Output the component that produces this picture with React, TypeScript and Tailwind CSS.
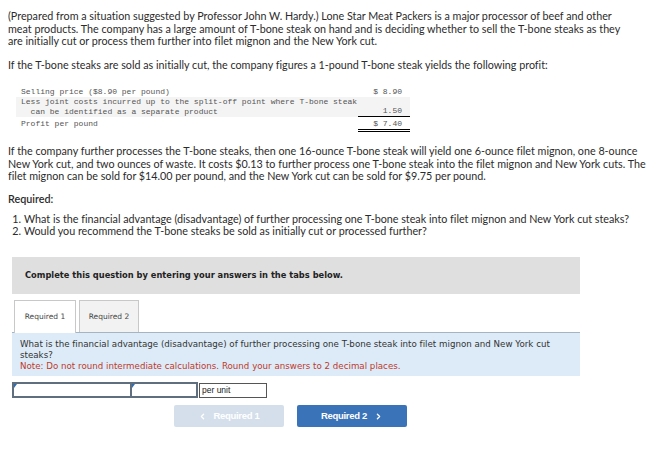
import { ChevronLeft, ChevronRight } from "lucide-react";

export default function App() {
  return (
    <div className="w-[663px] h-[459px] bg-white overflow-hidden text-[#2b2b2b] [font-variant-ligatures:none]">
      <div className="pl-[8px] pt-[10px] font-['Lato',sans-serif] text-[10.75px] leading-[12.5px]">
        <p className="whitespace-nowrap">
          (Prepared from a situation suggested by Professor John W. Hardy.) Lone Star Meat Packers is a major processor of beef and other
          <br />
          meat products. The company has a large amount of T-bone steak on hand and is deciding whether to sell the T-bone steaks as they
          <br />
          are initially cut or process them further into filet mignon and the New York cut.
        </p>
        <p className="mt-[11px] whitespace-nowrap">
          If the T-bone steaks are sold as initially cut, the company figures a 1-pound T-bone steak yields the following profit:
        </p>
      </div>

      <div className="ml-[16px] mt-[16px] w-[394px] font-['Liberation_Mono',monospace] text-[8px] leading-[10px] text-[#555]">
        <div className="flex">
          <div className="w-[342px] pl-[5px]">Selling price ($8.90 per pound)</div>
          <div className="w-[52px] text-right pr-[8px]">$ 8.90</div>
        </div>
        <div className="flex bg-[#f4f4f4]">
          <div className="w-[342px] pl-[5px] whitespace-pre">
            {"Less joint costs incurred up to the split-off point where T-bone steak\n  can be identified as a separate product"}
          </div>
          <div className="w-[52px] flex flex-col justify-end text-right pr-[8px] border-b border-black">1.50</div>
        </div>
        <div className="flex">
          <div className="w-[342px] pl-[5px] pt-[2px]">Profit per pound</div>
          <div className="w-[52px] text-right pr-[8px] pt-[2px] border-b-[3px] border-double border-black">$ 7.40</div>
        </div>
      </div>

      <div className="pl-[8px] mt-[13px] font-['Lato',sans-serif] text-[10.75px] leading-[12.5px]">
        <p className="whitespace-nowrap">
          If the company further processes the T-bone steaks, then one 16-ounce T-bone steak will yield one 6-ounce filet mignon, one 8-ounce
          <br />
          New York cut, and two ounces of waste. It costs $0.13 to further process one T-bone steak into the filet mignon and New York cuts. The
          <br />
          filet mignon can be sold for $14.00 per pound, and the New York cut can be sold for $9.75 per pound.
        </p>
        <p className="mt-[10px] font-semibold">Required:</p>
        <div className="mt-[8px] leading-[12px]">
          <div className="flex">
            <span className="w-[13px] text-right">1.</span>
            <span className="ml-[3px] whitespace-nowrap">
              What is the financial advantage (disadvantage) of further processing one T-bone steak into filet mignon and New York cut steaks?
            </span>
          </div>
          <div className="flex">
            <span className="w-[13px] text-right">2.</span>
            <span className="ml-[3px] whitespace-nowrap">
              Would you recommend the T-bone steaks be sold as initially cut or processed further?
            </span>
          </div>
        </div>
      </div>

      <div className="ml-[12px] mt-[20px] w-[568px] h-[37px] bg-[#dfdfdf] flex items-center pl-[13px] font-['DejaVu_Sans',sans-serif] font-bold text-[8.3px] text-[#222]">
        Complete this question by entering your answers in the tabs below.
      </div>

      <div className="ml-[12px] mt-[5px] w-[568px] font-['DejaVu_Sans',sans-serif]">
        <div className="flex items-end pl-[2px] gap-[3px] h-[33px]">
          <div className="relative top-[1px] w-[62px] h-[33px] bg-white border border-b-0 border-[#c8c8c8] flex items-center justify-center text-[7.5px] text-[#444]">
            Required 1
          </div>
          <div className="w-[60px] h-[32px] bg-[#f2f2f2] border border-b-0 border-[#c8c8c8] flex items-center justify-center text-[7.5px] text-[#444]">
            Required 2
          </div>
        </div>
        <div className="bg-[#dcebf7] border-t border-[#a6b4c2] pt-[6px] pb-[4px] pl-[8px] text-[8.7px] leading-[11px] text-[#333]">
          <p>
            What is the financial advantage (disadvantage) of further processing one T-bone steak into filet mignon and New York cut
            <br />
            steaks?
          </p>
          <p className="text-[#c0392b]">Note: Do not round intermediate calculations. Round your answers to 2 decimal places.</p>
        </div>
      </div>

      <div className="ml-[12px] mt-[6px] flex items-center">
        <div className="relative w-[120px] h-[16px] border-2 border-[#5f6f80] bg-white">
          <div className="absolute left-0 top-0 w-0 h-0 border-t-[4px] border-r-[3px] border-t-[#2f6db3] border-r-transparent" />
        </div>
        <div className="relative w-[66px] h-[16px] border-2 border-l-0 border-[#5f6f80] bg-white">
          <div className="absolute left-0 top-0 w-0 h-0 border-t-[4px] border-r-[3px] border-t-[#2f6db3] border-r-transparent" />
        </div>
        <div className="w-[68px] h-[15px] border border-[#555] bg-white ml-[1px] pl-[2px] flex items-center font-['Liberation_Sans',sans-serif] text-[8.5px] text-[#222]">
          per unit
        </div>
      </div>

      <div className="ml-[174px] mt-[7px] flex gap-[13px] font-['Liberation_Sans',sans-serif] font-bold text-[9.5px] tracking-[-0.3px]">
        <div className="w-[110px] h-[22px] rounded-[2px] bg-[#d4dfeb] text-white flex items-center justify-center gap-[6px]">
          <ChevronLeft size={9} strokeWidth={3.5} />
          <span>Required 1</span>
        </div>
        <div className="w-[110px] h-[22px] rounded-[2px] bg-[#3a73b8] text-white flex items-center justify-center gap-[7px]">
          <span>Required 2</span>
          <ChevronRight size={9} strokeWidth={3.5} />
        </div>
      </div>
    </div>
  );
}
